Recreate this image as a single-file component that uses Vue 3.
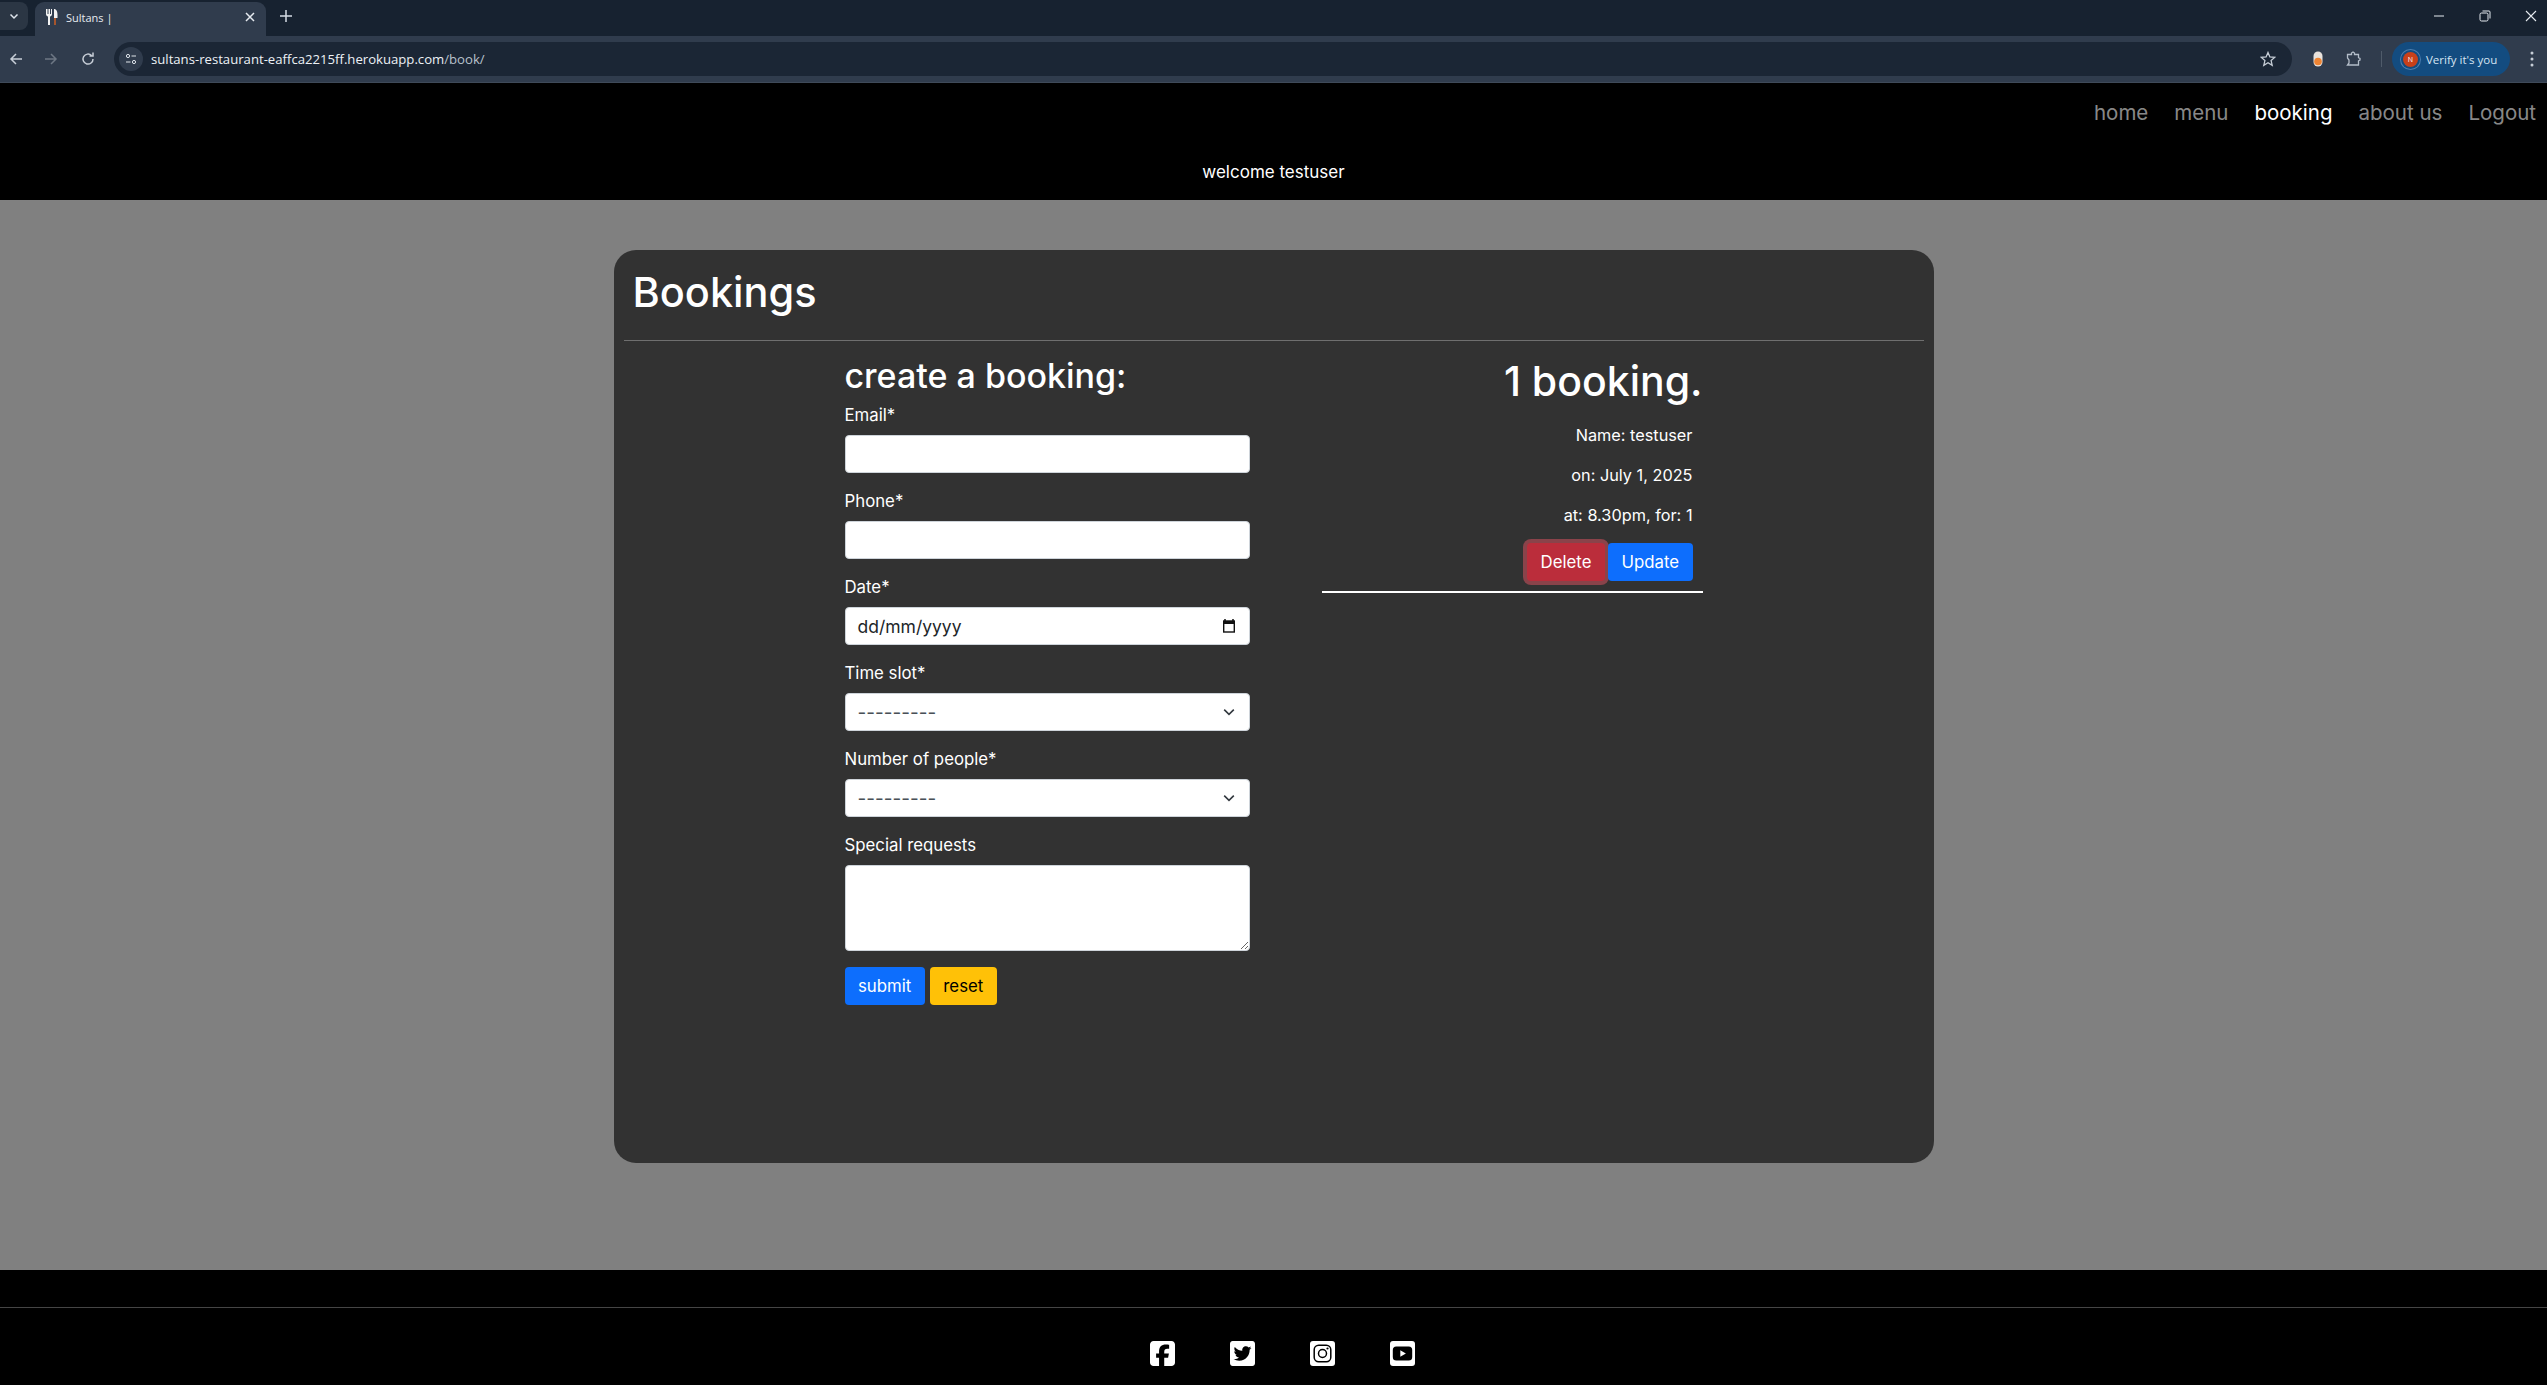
<template>
  <div class="window">
    <div class="tabstrip">
      <div class="tab-search">
        <svg width="12" height="12" viewBox="0 0 12 12"><path d="M2.500 4.500 6 8l3.500-3.500" fill="none" stroke="#dfe5ec" stroke-width="1.500"/></svg>
      </div>
      <div class="tab">
        <svg class="favicon" width="14" height="18" viewBox="0 0 14 18">
          <path d="M1 1v5c0 1.500 1 2.300 2 2.600V17h2V8.600C6 8.300 7 7.500 7 6V1H6v5H5V1H3.500v5h-1V1z" fill="#f2f2f2"/>
          <path d="M9 1c2.500 0 3.500 2.500 3.500 6v3H11v7H9z" fill="#f2f2f2"/>
          <path d="M9 10h2v7H9z" fill="#a5552d"/>
        </svg>
        <span class="tab-title">Sultans |</span>
        <svg class="tab-close" width="10" height="10" viewBox="0 0 10 10"><path d="M1 1l8 8M9 1l-8 8" stroke="#e6ebf0" stroke-width="1.500"/></svg>
      </div>
      <svg class="new-tab" width="12" height="12" viewBox="0 0 12 12"><path d="M6 0v12M0 6h12" stroke="#d5dbe3" stroke-width="1.500"/></svg>
      <div class="window-controls">
        <svg width="12" height="12" viewBox="0 0 12 12"><path d="M1 6h10" stroke="#e6ebf0" stroke-width="1"/></svg>
        <svg width="12" height="12" viewBox="0 0 12 12"><rect x="1" y="3" width="8" height="8" rx="1.500" fill="none" stroke="#e6ebf0"/><path d="M3.500 1H10a1 1 0 0 1 1 1v6.500" fill="none" stroke="#e6ebf0"/></svg>
        <svg width="12" height="12" viewBox="0 0 12 12"><path d="M1 1l10 10M11 1 1 11" stroke="#e6ebf0" stroke-width="1.100"/></svg>
      </div>
    </div>
    <div class="toolbar">
      <svg width="16" height="16" viewBox="0 0 16 16"><path d="M14 8H3M8 3 3 8l5 5" fill="none" stroke="#c7ced7" stroke-width="1.500"/></svg>
      <svg width="16" height="16" viewBox="0 0 16 16"><path d="M2 8h11M8 3l5 5-5 5" fill="none" stroke="#6d7784" stroke-width="1.500"/></svg>
      <svg width="16" height="16" viewBox="0 0 16 16"><path d="M13 8a5 5 0 1 1-1.500-3.500M13 1.500V5H9.500" fill="none" stroke="#c7ced7" stroke-width="1.500"/></svg>
      <div class="omnibox">
        <div class="site-info">
          <svg width="12" height="12" viewBox="0 0 12 12"><circle cx="3" cy="3" r="1.600" fill="none" stroke="#dfe5ec"/><path d="M6.500 3H11M1 9h4.500" stroke="#dfe5ec" stroke-width="1.200"/><circle cx="9" cy="9" r="1.600" fill="none" stroke="#dfe5ec"/></svg>
        </div>
        <span class="url">sultans-restaurant-eaffca2215ff.herokuapp.com<span class="url-path">/book/</span></span>
        <svg class="star" width="16" height="16" viewBox="0 0 16 16"><path d="M8 1.500 9.900 6l4.800.4-3.600 3.200 1.100 4.700L8 11.800l-4.200 2.500 1.100-4.700L1.300 6.400 6.100 6z" fill="none" stroke="#c7ced7" stroke-width="1.300"/></svg>
      </div>
      <svg class="ext-pill" width="10" height="16" viewBox="0 0 10 16"><rect x="0.500" y="0.500" width="9" height="15" rx="4.500" fill="#e8e2dc"/><circle cx="5" cy="10.500" r="3.800" fill="#ee8433"/></svg>
      <svg class="puzzle" width="16" height="16" viewBox="0 0 16 16"><path d="M1.500 3.500h4V2l1.500-1 1.500 1v1.500h4v3.200l1.500.8v1.500l-1.500.8v4.200H1.500l1.500-2v-3l-1.500-2z" fill="none" stroke="#b3bdc9" stroke-width="1.300"/></svg>
      <div class="divider"></div>
      <div class="verify">
        <span class="avatar">N</span>
        <span>Verify it's you</span>
      </div>
      <svg class="kebab" width="4" height="16" viewBox="0 0 4 16"><circle cx="2" cy="2" r="1.500" fill="#c7ced7"/><circle cx="2" cy="8" r="1.500" fill="#c7ced7"/><circle cx="2" cy="14" r="1.500" fill="#c7ced7"/></svg>
    </div>

    <header class="site-header">
      <nav class="nav">
        <a v-for="link in links" :key="link" class="nav-link" :class="{ active: link === 'booking' }">{{ link }}</a>
      </nav>
      <p class="welcome">welcome testuser</p>
    </header>

    <main class="page">
      <section class="card">
        <h1 class="card-title">Bookings</h1>
        <hr class="rule" />
        <div class="booking-row">
          <form class="booking-form" @submit.prevent>
            <h3 class="form-title">create a booking:</h3>
            <label class="label">Email*</label>
            <input class="control" type="text" />
            <label class="label">Phone*</label>
            <input class="control" type="text" />
            <label class="label">Date*</label>
            <div class="control date-control">
              <span>dd/mm/yyyy</span>
              <svg width="14" height="14" viewBox="0 0 14 14"><path d="M3 0v2M11 0v2" stroke="#111" stroke-width="1.500"/><rect x="1.700" y="2" width="10.600" height="11" fill="none" stroke="#111" stroke-width="1.400"/><rect x="1.700" y="2" width="10.600" height="3" fill="#111"/></svg>
            </div>
            <template v-for="name in selects" :key="name">
              <label class="label">{{ name }}</label>
              <div class="control select-control">
                <span>---------</span>
                <svg width="16" height="16" viewBox="0 0 16 16"><path d="m2 5 6 6 6-6" fill="none" stroke="#343a40" stroke-width="2"/></svg>
              </div>
            </template>
            <label class="label">Special requests</label>
            <textarea class="control textarea"></textarea>
            <div class="form-actions">
              <button class="btn btn-blue" type="submit">submit</button>
              <button class="btn btn-yellow" type="reset">reset</button>
            </div>
          </form>

          <div class="booking-list">
            <h2 class="list-title">1 booking.</h2>
            <div class="booking-item">
              <p>Name: testuser</p>
              <p>on: July 1, 2025</p>
              <p>at: 8.30pm, for: 1</p>
              <div class="item-actions">
                <button class="btn btn-red">Delete</button>
                <button class="btn btn-blue">Update</button>
              </div>
            </div>
            <hr class="item-rule" />
          </div>
        </div>
      </section>
    </main>

    <footer class="site-footer">
      <hr class="footer-rule" />
      <div class="socials">
        <svg width="25" height="25" viewBox="0 32 448 448"><path fill="#fff" d="M64 32C28.700 32 0 60.700 0 96V416c0 35.300 28.700 64 64 64h98.200V334.200H109.400V256h52.800V222.300c0-87.100 39.400-127.400 125-127.400c16.200 0 44.200 3.200 55.700 6.400V172c-6-.6-16.500-1-29.600-1c-42 0-58.200 15.900-58.200 57.200V256h83.600l-14.400 78.200H255V480H384c35.300 0 64-28.700 64-64V96c0-35.300-28.700-64-64-64H64z"/></svg>
        <svg width="25" height="25" viewBox="0 32 448 448"><path fill="#fff" d="M400 32H48C21.500 32 0 53.500 0 80v352c0 26.500 21.500 48 48 48h352c26.500 0 48-21.500 48-48V80c0-26.500-21.500-48-48-48zm-48.900 158.800c.2 2.800.2 5.700.2 8.500 0 86.700-66 186.600-186.600 186.600-37.200 0-71.700-10.800-100.700-29.400 5.300.6 10.400.8 15.800.8 30.700 0 58.900-10.400 81.400-28-28.800-.6-53-19.500-61.300-45.500 10.100 1.500 19.200 1.500 29.600-1.200-30-6.100-52.500-32.500-52.500-64.400v-.8c8.700 4.900 18.900 7.900 29.600 8.300a65.447 65.447 0 0 1-29.200-54.600c0-12.200 3.200-23.400 8.900-33.100 32.300 39.800 80.800 65.800 135.200 68.600-9.300-44.500 24-80.600 64-80.600 18.900 0 35.900 7.900 47.900 20.700 14.800-2.800 29-8.300 41.600-15.800-4.900 15.200-15.100 28-28.600 36 13.100-1.400 25.800-5.100 37.600-10.200-8.900 13.100-20.100 24.700-32.900 34z"/></svg>
        <svg width="25" height="25" viewBox="0 0 25 25"><rect width="25" height="25" rx="3" fill="#fff"/><rect x="4.200" y="4.200" width="16.600" height="16.600" rx="4.500" fill="none" stroke="#000" stroke-width="1.500"/><circle cx="12.500" cy="12.500" r="4" fill="none" stroke="#000" stroke-width="1.500"/><circle cx="17.500" cy="7.500" r="1.100" fill="#000"/></svg>
        <svg width="25" height="25" viewBox="0 0 25 25"><rect width="25" height="25" rx="3" fill="#fff"/><rect x="2.800" y="5.500" width="19.400" height="14" rx="3.500" fill="#000"/><path d="M10.300 9.300v6.400l5.600-3.200z" fill="#fff"/></svg>
      </div>
    </footer>
  </div>
</template>

<script setup>
const links = ["home", "menu", "booking", "about us", "Logout"];
const selects = ["Time slot*", "Number of people*"];
</script>

<style>
html,
body {
  margin: 0;
  background: #000;
}
</style>

<style scoped>
.window {
  display: flex;
  flex-direction: column;
  height: 1385px;
  overflow: hidden;
  font-family: Inter, "Liberation Sans", sans-serif;
  color: #fff;
}

/* browser chrome */
.tabstrip {
  display: flex;
  align-items: flex-end;
  height: 36px;
  background: #172230;
  flex-shrink: 0;
}
.tab-search {
  display: flex;
  align-items: center;
  justify-content: center;
  width: 28px;
  height: 28px;
  margin: 0 7px 6px 0;
  background: #2b3644;
  border-radius: 0 8px 8px 0;
}
.tab {
  display: flex;
  align-items: center;
  width: 231px;
  height: 34px;
  padding: 0 11px 4px 10px;
  box-sizing: border-box;
  background: #303c4d;
  border-radius: 9px 9px 0 0;
  font: 11px "Open Sans", sans-serif;
  color: #e6ebf0;
}
.favicon {
  margin-right: 7px;
}
.tab-title {
  flex: 1;
}
.new-tab {
  margin: 0 0 14px 14px;
}
.window-controls {
  display: flex;
  gap: 34px;
  margin: 0 10px 14px auto;
}
.toolbar {
  display: flex;
  align-items: center;
  height: 46px;
  padding: 0 8px;
  background: #303c4d;
  border-bottom: 1px solid #3f4a59;
  flex-shrink: 0;
}
.toolbar > svg:nth-child(2) {
  margin-left: 19px;
}
.toolbar > svg:nth-child(3) {
  margin-left: 21px;
}
.omnibox {
  display: flex;
  align-items: center;
  width: 2178px;
  height: 34px;
  margin-left: 18px;
  padding: 0 16px 0 5px;
  box-sizing: border-box;
  background: #1b2635;
  border-radius: 17px;
  font: 13.150px "Open Sans", sans-serif;
  color: #edf1f5;
}
.site-info {
  display: flex;
  align-items: center;
  justify-content: center;
  width: 24px;
  height: 24px;
  margin-right: 8px;
  background: #303c4d;
  border-radius: 50%;
}
.url {
  flex: 1;
}
.url-path {
  color: #b8c1cc;
}
.ext-pill {
  margin-left: 21px;
}
.puzzle {
  margin-left: 23px;
}
.divider {
  width: 1px;
  height: 16px;
  margin: 0 10px 0 19px;
  background: #4f5b6a;
}
.verify {
  display: flex;
  align-items: center;
  gap: 8px;
  width: 118px;
  height: 34px;
  padding-left: 11px;
  box-sizing: border-box;
  background: #134c80;
  border-radius: 17px;
  font: 11.500px "Open Sans", sans-serif;
  color: #d6e4f2;
}
.avatar {
  display: flex;
  align-items: center;
  justify-content: center;
  width: 15px;
  height: 15px;
  background: #c8401a;
  border-radius: 50%;
  box-shadow: 0 0 0 2px #134c80, 0 0 0 3px #4d7fb0;
  font-size: 7px;
  color: #fff;
}
.kebab {
  margin-left: 20px;
}

/* site */
.site-header {
  height: 117px;
  background: #000;
  flex-shrink: 0;
}
.nav {
  display: flex;
  justify-content: flex-end;
  gap: 26px;
  padding: 16px 11px 0 0;
}
.nav-link {
  font-size: 20.500px;
  line-height: 28px;
  color: rgba(255, 255, 255, 0.55);
}
.nav-link.active {
  color: #fff;
}
.welcome {
  margin: 33px 0 0;
  text-align: center;
  font-size: 17px;
  line-height: 24px;
}
.page {
  flex: 1;
  padding-top: 50px;
  background: #808080;
}
.card {
  width: 1320px;
  height: 913px;
  margin: 0 auto;
  padding: 0 10px;
  box-sizing: border-box;
  background: #323232;
  border-radius: 22px;
}
.card-title {
  margin: 0;
  padding: 18px 0 0 9px;
  font-size: 41.500px;
  line-height: 48px;
  font-weight: 500;
}
.rule {
  height: 1px;
  margin: 24px 0 0;
  border: 0;
  background: #6f6f6f;
}
.booking-row {
  display: flex;
  gap: 72px;
  padding-left: 221px;
}
.booking-form {
  width: 405px;
  display: flex;
  flex-direction: column;
  padding-top: 16px;
}
.form-title {
  margin: 0 0 8px;
  font-size: 34px;
  line-height: 38px;
  font-weight: 500;
}
.label {
  margin-bottom: 8px;
  font-size: 16.800px;
  line-height: 24px;
}
.control {
  height: 38px;
  margin-bottom: 16px;
  padding: 0 12px;
  box-sizing: border-box;
  background: #fff;
  border: 1px solid #ced4da;
  border-radius: 4px;
  font-size: 16px;
  color: #212529;
  flex-shrink: 0;
}
.date-control,
.select-control {
  display: flex;
  align-items: center;
  justify-content: space-between;
}
.date-control span {
  font-size: 17.500px;
}
.date-control svg {
  margin-right: 1px;
}
.select-control svg {
  transform: scale(0.8);
}
.select-control span {
  color: #495057;
  font-size: 19px;
}
.textarea {
  display: block;
  height: 86px;
  outline: none;
}
.form-actions {
  display: flex;
  gap: 5px;
}
.btn {
  height: 38px;
  padding: 0 13.500px;
  border: 0;
  border-radius: 4px;
  font-family: inherit;
  font-size: 16.800px;
  color: #fff;
}
.btn-blue {
  background: #0d6efd;
}
.btn-yellow {
  background: #ffc107;
  color: #000;
}
.btn-red {
  background: #bb2d3b;
  box-shadow: 0 0 0 4px rgba(225, 83, 97, 0.5);
}
.booking-list {
  width: 381px;
  text-align: right;
  padding-top: 16px;
}
.list-title {
  margin: 0 0 18px;
  font-size: 41px;
  line-height: 48px;
  font-weight: 500;
}
.booking-item {
  padding-right: 10px;
}
.booking-item p {
  margin: 0 0 16px;
  font-size: 16.300px;
  line-height: 24px;
}
.item-actions {
  display: flex;
  justify-content: flex-end;
  gap: 3px;
  margin-top: 5px;
}
.item-rule {
  height: 2px;
  margin: 10px 0 0;
  border: 0;
  background: #fff;
}
.site-footer {
  height: 115px;
  background: #000;
  flex-shrink: 0;
}
.footer-rule {
  height: 1px;
  margin: 0;
  position: relative;
  top: 37px;
  border: 0;
  background: #454545;
}
.socials {
  display: flex;
  justify-content: center;
  gap: 55px;
  padding: 70px 0 0 18px;
}
</style>
